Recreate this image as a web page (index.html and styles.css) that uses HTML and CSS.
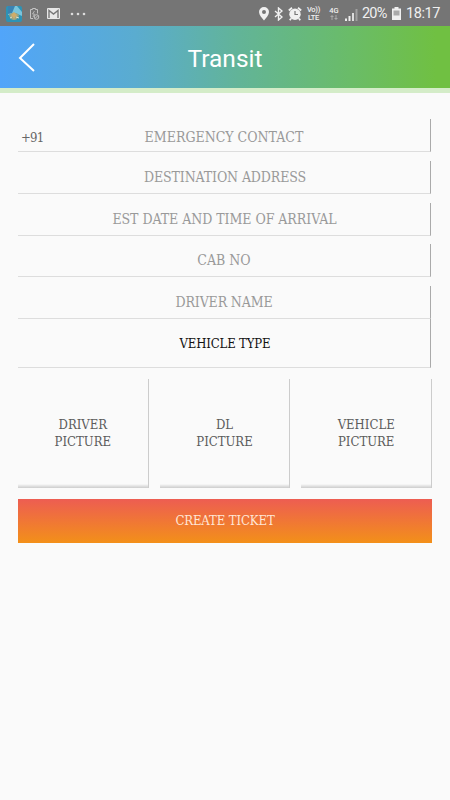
FILE: index.html
```html
<!DOCTYPE html>
<html lang="en">
<head>
    <meta charset="UTF-8">
    <meta name="viewport" content="width=device-width, initial-scale=1.0">
    <title>Transit</title>
    <link rel="stylesheet" href="styles.css">
</head>
<body>
    <div class="status-bar">
        <div class="status-left">
            <svg class="app-icon" width="16" height="16" viewBox="0 0 16 16">
                <rect width="16" height="16" rx="2" fill="#2d93b5"/>
                <path d="M2 0h9l5 6v4L9 7 2 9z" fill="#79c4dc"/>
                <path d="M2 0h7l-3 7-4 1z" fill="#3a83b4"/>
                <path d="M3 9c2-3 8-3 10 0-1 4-3 5-5 5s-4-1-5-5z" fill="#9aa584"/>
                <path d="M5 9l3-3 3 3-3 4z" fill="#d0ac6a"/>
                <path d="M4 12l2-1M10 11l3 1" stroke="#e1dfc8"/>
            </svg>
            <svg class="battery-off" width="11" height="14" viewBox="0 0 11 14" fill="none" stroke="#c4c4c4">
                <path d="M4 11.5H1.5v-9h2v-1h3v1h2v4"/>
                <path d="M5.5 4L3.5 7h2L4 10" stroke-width=".8"/>
                <circle cx="7.5" cy="10" r="2.3"/>
                <path d="M6 11.5l3-3"/>
            </svg>
            <svg class="mail" width="13" height="11" viewBox="0 0 13 11">
                <rect width="13" height="11" rx="1" fill="#e8e8e8"/>
                <path d="M2 10V2.500L6.500 6 11 2.500V10" fill="none" stroke="#777" stroke-width="1.400"/>
            </svg>
            <svg width="16" height="4" viewBox="0 0 16 4" fill="#ddd">
                <circle cx="2" cy="2" r="1.300"/>
                <circle cx="8" cy="2" r="1.300"/>
                <circle cx="14" cy="2" r="1.300"/>
            </svg>
        </div>
        <div class="status-right">
            <svg class="pin" width="10" height="14" viewBox="0 0 10 14">
                <path fill-rule="evenodd" d="M5 0a5 5 0 0 0-5 5c0 3 3 6 5 8.500C7 11 10 8 10 5a5 5 0 0 0-5-5zm0 3a2 2 0 1 1 0 4 2 2 0 0 1 0-4z" fill="#f0f0f0"/>
            </svg>
            <svg class="bluetooth" width="9" height="14" viewBox="0 0 9 14" fill="none" stroke="#f0f0f0" stroke-width="1.400">
                <path d="M1 4l7 6-3.500 3V1L8 4l-7 6"/>
            </svg>
            <svg class="alarm" width="14" height="14" viewBox="0 0 14 14">
                <path d="M.8 3.500L4 .8M10 .8l3.200 2.700M3 11.500l-1.200 1.700M11 11.500l1.200 1.700" stroke="#f0f0f0" stroke-width="1.800"/>
                <circle cx="7" cy="7.300" r="5.700" fill="#f0f0f0"/>
                <path d="M7 4v3.500h3" fill="none" stroke="#777" stroke-width="1.200"/>
            </svg>
            <div class="volte"><span>Vo))</span><span>LTE</span></div>
            <div class="network">
                <span>4G</span>
                <svg width="8" height="5" viewBox="0 0 8 5" fill="#aaa">
                    <path d="M2 0l2 2H2.500v3h-1V2H0zM5.500 0h1v3H8L6 5 4 3h1.500z"/>
                </svg>
            </div>
            <svg class="signal" width="13" height="12" viewBox="0 0 13 12">
                <path d="M0 9.500h2V12H0zM3.500 7h2v5h-2z" fill="#eee"/>
                <path d="M7 4h2v8H7z" fill="#ddd"/>
                <path d="M10.500 0h2v12h-2z" fill="#a0a0a0"/>
            </svg>
            <span class="percent">20%</span>
            <svg class="battery" width="9" height="13" viewBox="0 0 9 13">
                <path d="M2.500 0h4v1.500H9V13H0V1.500h2.500z" fill="#f0f0f0"/>
                <path d="M1.500 3.500h6v5h-6z" fill="#aaa"/>
            </svg>
            <span class="time">18:17</span>
        </div>
    </div>

    <header class="header">
        <svg class="back" width="18" height="32" viewBox="0 0 18 32">
            <path d="M16 3L2 17l14 13" fill="none" stroke="#fff" stroke-width="2"/>
        </svg>
        <h1>Transit</h1>
    </header>

    <main class="form">
        <div class="field contact">
            <span class="prefix">+91</span>
            <span>EMERGENCY CONTACT</span>
        </div>
        <div class="field address"><span>DESTINATION ADDRESS</span></div>
        <div class="field arrival"><span>EST DATE AND TIME OF ARRIVAL</span></div>
        <div class="field"><span>CAB NO</span></div>
        <div class="field driver"><span>DRIVER NAME</span></div>
        <div class="field vehicle-type"><span>VEHICLE TYPE</span></div>

        <div class="pictures">
            <div class="picture">DRIVER<br>PICTURE</div>
            <div class="picture">DL<br>PICTURE</div>
            <div class="picture">VEHICLE<br>PICTURE</div>
        </div>

        <button class="create">CREATE TICKET</button>
    </main>
</body>
</html>
```
FILE: styles.css
```css
* {
    box-sizing: border-box;
}
body {
    margin: 0;
    height: 800px;
    background-color: #fafafa;
    font-family: "DejaVu Serif Condensed", "DejaVu Serif", serif;
}
.status-bar {
    height: 26px;
    padding: 1px 9px 0 6px;
    background-color: #757575;
    color: #f0f0f0;
    font-family: Roboto, sans-serif;
    display: flex;
    align-items: center;
    justify-content: space-between;
}
.status-left,
.status-right {
    display: flex;
    align-items: center;
}
.battery-off {
    margin-left: 7px;
}
.mail {
    margin: 0 10px 0 7px;
}
.bluetooth {
    margin-left: 5px;
}
.alarm {
    margin-left: 5px;
}
.volte,
.network {
    display: flex;
    flex-direction: column;
    align-items: center;
    font-size: 7.5px;
    line-height: 8px;
    font-weight: 500;
}
.volte {
    width: 15px;
    margin-left: 4px;
    letter-spacing: -0.3px;
}
.network {
    width: 12px;
    margin-left: 7px;
}
.signal {
    margin: 2px 4px 0 5px;
}
.percent {
    width: 26px;
    font-size: 14.5px;
    letter-spacing: -0.8px;
}
.battery {
    margin: 0 5px 0 4px;
}
.time {
    width: 35px;
    font-size: 14.5px;
    letter-spacing: -0.4px;
}
.header {
    height: 67px;
    border-bottom: 5px solid #d4ecc8;
    background: linear-gradient(to right, #51a5fa 0%, #5aacd0 30%, #62b498 53%, #6abc68 78%, #70c042 97%);
    background-origin: border-box;
    display: grid;
    grid-template-columns: 1fr auto 1fr;
    align-items: center;
    color: white;
}
.back {
    margin-left: 18px;
}
h1 {
    margin: 3px 0 0;
    font-family: Roboto, sans-serif;
    font-size: 24.5px;
    font-weight: 400;
}
.form {
    padding: 26px 18px 0;
}
.field {
    position: relative;
    height: 33px;
    margin: 0 1px 8.75px 0;
    border-right: 1px solid #aaa;
    border-bottom: 1px solid #ddd;
    display: flex;
    align-items: center;
    justify-content: center;
    color: #999;
    font-size: 14px;
    white-space: nowrap;
}
.contact {
    padding-top: 4px;
}
.address {
    padding-left: 2px;
    letter-spacing: -0.12px;
}
.arrival {
    padding-left: 1px;
    letter-spacing: -0.05px;
}
.driver {
    letter-spacing: -0.15px;
}
.prefix {
    position: absolute;
    left: 3px;
    color: #666;
    font-size: 13px;
    letter-spacing: -0.7px;
}
.vehicle-type {
    height: 49px;
    margin-top: -8.75px;
    margin-bottom: 11px;
    padding-left: 2px;
    color: #111;
    font-size: 13px;
    letter-spacing: -0.15px;
}
.pictures {
    display: grid;
    grid-template-columns: repeat(3, 1fr);
    gap: 11px;
}
.picture {
    height: 109px;
    border-right: 1px solid #ccc;
    background: linear-gradient(to bottom, transparent 105px, #eee 106px, #ccc 109px);
    display: flex;
    align-items: center;
    justify-content: center;
    text-align: center;
    color: #5c5c5c;
    font-size: 13px;
    line-height: 16.5px;
}
.create {
    width: 100%;
    height: 44px;
    margin-top: 11px;
    padding: 0 0 1px;
    border: none;
    background: linear-gradient(to bottom, #ed5d52, #f39019);
    color: #ffe6d6;
    font-family: inherit;
    font-size: 13px;
    letter-spacing: -0.1px;
}
```
